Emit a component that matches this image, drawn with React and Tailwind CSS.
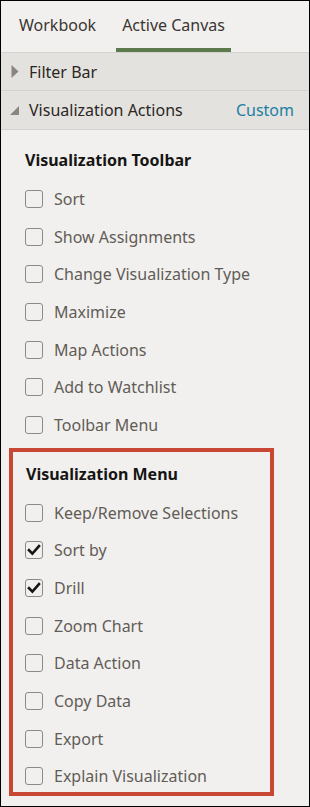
import React from "react";

const font = { fontFamily: '"Noto Sans", "Open Sans", sans-serif' };

function Checkbox({ checked }) {
  return (
    <div className="w-[18px] h-[18px] shrink-0 rounded-[3px] border-[1.5px] border-[#8d8986] flex items-center justify-center">
      {checked && (
        <svg width="14" height="14" viewBox="0 0 14 14">
          <path d="M2 7.2 L5.4 10.6 L12 3.2" fill="none" stroke="#161513" strokeWidth="2.6" strokeLinecap="square" strokeLinejoin="miter" />
        </svg>
      )}
    </div>
  );
}

function Row({ label, checked }) {
  return (
    <div className="h-[37.7px] flex items-center">
      <Checkbox checked={checked} />
      <span className="ml-[11px] text-[16px] text-[#625c57] leading-none whitespace-nowrap">{label}</span>
    </div>
  );
}

export default function App() {
  const toolbar = ["Sort", "Show Assignments", "Change Visualization Type", "Maximize", "Map Actions", "Add to Watchlist", "Toolbar Menu"];
  const menu = [
    ["Keep/Remove Selections", false],
    ["Sort by", true],
    ["Drill", true],
    ["Zoom Chart", false],
    ["Data Action", false],
    ["Copy Data", false],
    ["Export", false],
    ["Explain Visualization", false],
  ];
  return (
    <div style={font} className="w-[310px] h-[807px] border border-black bg-[#f1f0ee] overflow-hidden box-border flex flex-col">
      {/* Tabs */}
      <div className="h-[51px] flex items-stretch pl-[12px] gap-[14px] shrink-0">
        <div className="px-[6px] flex items-center pb-[3px] text-[16px] text-[#3a3632]">Workbook</div>
        <div className="relative px-[6px] flex items-center pb-[3px] text-[16px] text-[#3a3632]">
          Active Canvas
          <div className="absolute left-0 right-0 bottom-0 h-[4px] bg-[#5c7a4c]" />
        </div>
      </div>
      <div className="h-px bg-[#d4d2cf] shrink-0" />
      {/* Filter bar */}
      <div className="h-[37px] bg-[#e4e2df] flex items-center shrink-0">
        <svg className="ml-[10px]" width="8" height="13" viewBox="0 0 8 13">
          <path d="M0.5 0 L7.5 6.5 L0.5 13 Z" fill="#8a8580" />
        </svg>
        <span className="ml-[10px] text-[16px] text-[#2b2724]">Filter Bar</span>
      </div>
      <div className="h-px bg-[#d4d2cf] shrink-0" />
      {/* Visualization Actions */}
      <div className="h-[38px] bg-[#e4e2df] flex items-center shrink-0">
        <svg className="ml-[9px]" width="9" height="9" viewBox="0 0 9 9">
          <path d="M9 0 L9 9 L0 9 Z" fill="#8a8580" />
        </svg>
        <span className="ml-[10px] text-[16px] text-[#2b2724]">Visualization Actions</span>
        <span className="ml-auto mr-[15px] text-[16px] text-[#227ea2]">Custom</span>
      </div>
      <div className="h-px bg-[#d4d2cf] shrink-0" />
      {/* Content */}
      <div className="pl-[24px] pt-[18px]">
        <div className="h-[24px] flex items-center text-[16px] font-bold text-[#161513]">Visualization Toolbar</div>
        <div className="mt-[8px]">
          {toolbar.map((t) => (
            <Row key={t} label={t} />
          ))}
        </div>
      </div>
      <div className="ml-[8px] mt-[4px] w-[265px] h-[348px] border-[4px] border-[#c74634] box-border overflow-hidden pl-[12px] pt-[10px]">
        <div className="h-[24px] flex items-center text-[16px] font-bold text-[#161513] pl-px">Visualization Menu</div>
        <div className="mt-[8px]">
          {menu.map(([t, c]) => (
            <Row key={t} label={t} checked={c} />
          ))}
        </div>
      </div>
    </div>
  );
}
